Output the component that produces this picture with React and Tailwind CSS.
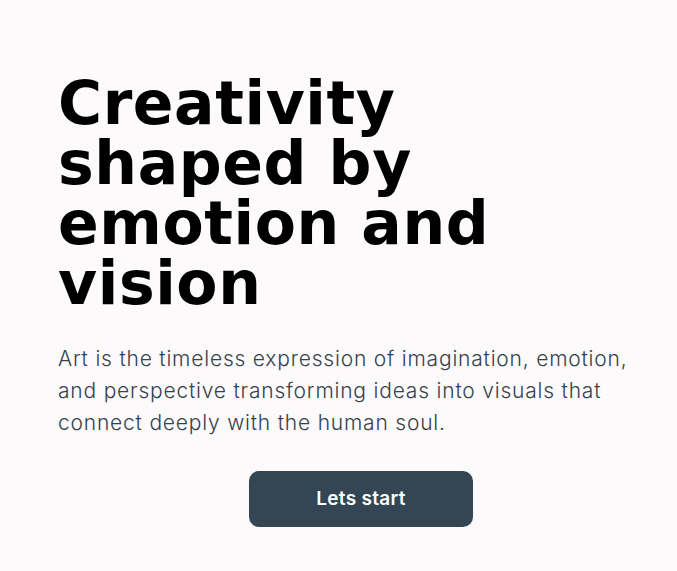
export default function App() {
  return (
    <div className="min-h-[571px] w-full bg-[#fcfafb]">
      <div className="w-[606px] ml-[58px] pt-[73px]">
        <h1
          className="text-[60px] leading-[60px] font-bold text-black tracking-[0.6px]"
          style={{ fontFamily: "'DejaVu Sans', sans-serif" }}
        >
          Creativity
          <br />
          shaped by
          <br />
          emotion and
          <br />
          vision
        </h1>
        <p
          className="mt-[30px] text-[21px] leading-[32px] font-light text-[#36414d] tracking-[0.8px] w-[595px]"
          style={{ fontFamily: "Inter, sans-serif" }}
        >
          Art is the timeless expression of imagination, emotion, and perspective transforming ideas into visuals that connect deeply with the human soul.
        </p>
        <div className="mt-[32px] flex justify-center">
          <button
            className="w-56 h-14 rounded-[10px] bg-[#344654] text-white text-[19px] font-semibold tracking-[0.3px]"
            style={{ fontFamily: "Inter, sans-serif" }}
          >
            Lets start
          </button>
        </div>
      </div>
    </div>
  );
}
